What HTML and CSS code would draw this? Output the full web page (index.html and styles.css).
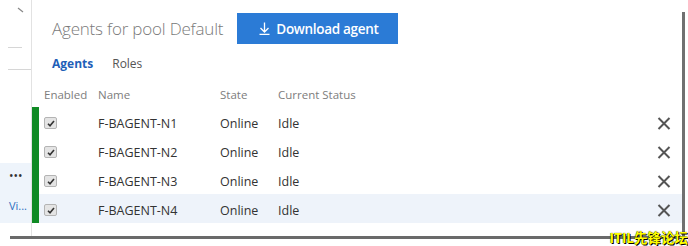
FILE: index.html
```html
<!DOCTYPE html>
<html lang="en">
<head>
    <meta charset="UTF-8">
    <title>Agents for pool Default</title>
    <link rel="stylesheet" href="styles.css">
</head>
<body>
    <div class="frame">
        <div class="window">
            <aside class="sidebar">
                <svg class="side-tick" width="8" height="6" viewBox="0 0 8 6"><path d="M1 1 L6 5" stroke="#888" stroke-width="1.2" fill="none"/></svg>
                <div class="side-rule short"></div>
                <div class="side-rule long"></div>
                <div class="side-active">
                    <span class="side-more">&bull;&bull;&bull;</span>
                    <span class="side-link">Vi...</span>
                </div>
            </aside>
            <main class="main">
                <header class="page-head">
                    <h1>Agents for pool Default</h1>
                    <button class="download-btn">
                        <svg width="11" height="13" viewBox="0 0 11 13"><path d="M5.5 0.5 V10 M1.5 6 L5.5 10 L9.5 6 M0.5 12.3 H10.5" stroke="#fff" stroke-width="1.3" fill="none"/></svg>
                        Download agent
                    </button>
                </header>
                <nav class="tabs">
                    <span class="tab active">Agents</span>
                    <span class="tab">Roles</span>
                </nav>
                <section class="agent-table">
                    <div class="row head">
                        <span>Enabled</span>
                        <span>Name</span>
                        <span>State</span>
                        <span>Current Status</span>
                        <span></span>
                    </div>
                    <div class="row agent">
                        <span class="check"><svg width="8" height="7" viewBox="0 0 8 7"><path d="M1 3.8 L3 5.8 L7 1" stroke="#333" stroke-width="1.6" fill="none"/></svg></span>
                        <span>F-BAGENT-N1</span>
                        <span>Online</span>
                        <span>Idle</span>
                        <span class="remove"><svg width="14" height="13" viewBox="0 0 14 13"><path d="M1.5 1 L12.5 12 M12.5 1 L1.5 12" stroke="#555" stroke-width="2" fill="none"/></svg></span>
                    </div>
                    <div class="row agent">
                        <span class="check"><svg width="8" height="7" viewBox="0 0 8 7"><path d="M1 3.8 L3 5.8 L7 1" stroke="#333" stroke-width="1.6" fill="none"/></svg></span>
                        <span>F-BAGENT-N2</span>
                        <span>Online</span>
                        <span>Idle</span>
                        <span class="remove"><svg width="14" height="13" viewBox="0 0 14 13"><path d="M1.5 1 L12.5 12 M12.5 1 L1.5 12" stroke="#555" stroke-width="2" fill="none"/></svg></span>
                    </div>
                    <div class="row agent">
                        <span class="check"><svg width="8" height="7" viewBox="0 0 8 7"><path d="M1 3.8 L3 5.8 L7 1" stroke="#333" stroke-width="1.6" fill="none"/></svg></span>
                        <span>F-BAGENT-N3</span>
                        <span>Online</span>
                        <span>Idle</span>
                        <span class="remove"><svg width="14" height="13" viewBox="0 0 14 13"><path d="M1.5 1 L12.5 12 M12.5 1 L1.5 12" stroke="#555" stroke-width="2" fill="none"/></svg></span>
                    </div>
                    <div class="row agent selected">
                        <span class="check"><svg width="8" height="7" viewBox="0 0 8 7"><path d="M1 3.8 L3 5.8 L7 1" stroke="#333" stroke-width="1.6" fill="none"/></svg></span>
                        <span>F-BAGENT-N4</span>
                        <span>Online</span>
                        <span>Idle</span>
                        <span class="remove"><svg width="14" height="13" viewBox="0 0 14 13"><path d="M1.5 1 L12.5 12 M12.5 1 L1.5 12" stroke="#555" stroke-width="2" fill="none"/></svg></span>
                    </div>
                </section>
            </main>
        </div>
    </div>
    <div class="watermark">ITIL先锋论坛</div>
</body>
</html>
```

FILE: styles.css
```css
body {
    margin: 0;
    background-color: #fff;
    font-family: "Open Sans", "Noto Sans CJK SC", sans-serif;
    color: #333;
}

/* window edge: dark lines on right and bottom */
.frame {
    width: 682px;
    padding: 0 3px 3px 0;
    background:
        linear-gradient(#707070, #707070) right 12px / 3px calc(100% - 12px) no-repeat,
        linear-gradient(#6a6a6a, #6a6a6a) 10px bottom / calc(100% - 10px) 3px no-repeat;
}

.window {
    display: flex;
    height: 236px;
    background-color: #fff;
}

.sidebar {
    width: 31px;
    border-right: 1px solid #e2e2e2;
    display: flex;
    flex-direction: column;
    flex-shrink: 0;
}

.side-tick {
    display: block;
    margin: 7px 0 0 17px;
}

.side-rule {
    height: 1px;
    background-color: #d6d6d6;
    margin-left: 8px;
}

.side-rule.short {
    width: 14px;
    margin-top: 34px;
}

.side-rule.long {
    width: 23px;
    margin-top: 21px;
}

.side-active {
    margin-top: 93px;
    height: 60px;
    background-color: #eef4fb;
    display: flex;
    flex-direction: column;
    padding-left: 9px;
    box-sizing: border-box;
}

.side-more {
    font-size: 12px;
    letter-spacing: 0;
    color: #333;
    margin-top: 6px;
    line-height: 14px;
}

.side-link {
    font-size: 11px;
    color: #2f6fc0;
    margin-top: 16px;
    line-height: 14px;
    white-space: nowrap;
}

.main {
    flex: 1;
    display: flex;
    flex-direction: column;
}

.page-head {
    display: flex;
    align-items: center;
    padding: 13px 0 0 20px;
}

.page-head h1 {
    margin: 0;
    font-size: 17px;
    font-weight: 300;
    color: #7a7a7a;
    letter-spacing: -0.2px;
    white-space: nowrap;
}

.download-btn {
    margin-left: 14px;
    width: 161px;
    height: 31px;
    border: none;
    background-color: #2b7bd6;
    color: #fff;
    font-family: inherit;
    font-size: 13.5px;
    font-weight: 600;
    display: flex;
    align-items: center;
    padding-left: 22px;
    gap: 6px;
    letter-spacing: -0.3px;
}

.tabs {
    display: flex;
    gap: 19px;
    padding-left: 20px;
    margin-top: 12px;
    font-size: 12px;
    line-height: 16px;
}

.tab {
    color: #555;
}

.tab.active {
    color: #1f5fb8;
    font-weight: 700;
}

.agent-table {
    margin-top: 13px;
}

.row {
    display: grid;
    grid-template-columns: 54px 122px 58px 1fr 25px;
    align-items: center;
    height: 29px;
    box-sizing: border-box;
    padding: 3px 0 0 5px;
    border-left: 7px solid #fff;
    font-size: 12.5px;
    color: #333;
}

.row.head {
    height: 22px;
    padding: 0 0 3px 5px;
    font-size: 11.5px;
    color: #7d7d7d;
}

.row.agent {
    border-left-color: #0f8a24;
}

.row.selected {
    background-color: #eef3fa;
}

.check {
    width: 11px;
    height: 10px;
    border: 1px solid #b4b4b4;
    border-radius: 2px;
    background-color: #e4e4e4;
    display: flex;
    align-items: center;
    justify-content: center;
}

.remove {
    display: flex;
    align-items: center;
}

.watermark {
    position: absolute;
    right: 0;
    bottom: 0;
    font-size: 13.5px;
    font-weight: 700;
    color: #ffff00;
    line-height: 16px;
    text-shadow: 0 0 1px #000, 1px 1px 0 #000;
}
```
